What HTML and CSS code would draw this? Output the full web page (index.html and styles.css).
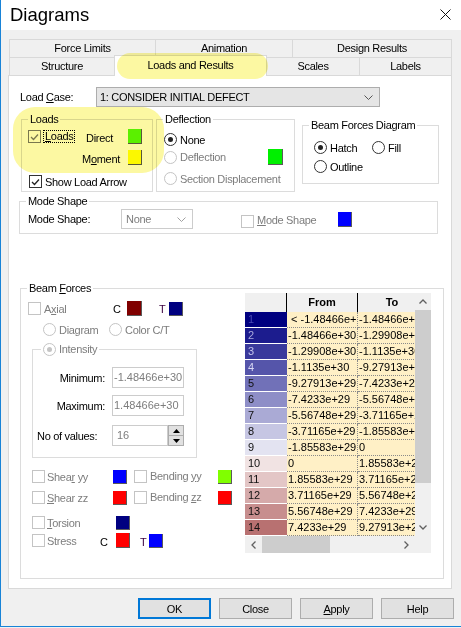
FILE: index.html
```html
<!DOCTYPE html>
<html>
<head>
<meta charset="utf-8">
<title>Diagrams</title>
<link rel="stylesheet" href="styles.css">
</head>
<body>
<div class="window">
  <div class="titlebar">
    <span class="title">Diagrams</span>
    <svg class="close" width="11" height="11" viewBox="0 0 11 11"><path d="M0.5 0.5L10.5 10.5M10.5 0.5L0.5 10.5" stroke="#111" stroke-width="1"/></svg>
  </div>
  <div class="client">
    <div class="tabs">
      <div class="tabrow">
        <div class="tab tw146">Force Limits</div>
        <div class="tab tw137">Animation</div>
        <div class="tab tw160 last">Design Results</div>
      </div>
      <div class="tabrow">
        <div class="tab tw105">Structure</div>
        <div class="tab tw153 sel">Loads and Results</div>
        <div class="tab tw92 nolb">Scales</div>
        <div class="tab tw93 last">Labels</div>
      </div>
    </div>
    <div class="panel">
      <div class="loadcase">
        <span class="lc-label">Load <u>C</u>ase:</span>
        <div class="combo lc-combo">
          <span>1: CONSIDER INITIAL DEFECT</span>
          <svg width="9" height="5" viewBox="0 0 9 5"><path d="M0.5 0.5L4.5 4.5L8.5 0.5" fill="none" stroke="#555" stroke-width="1"/></svg>
        </div>
      </div>

      <div class="grouprow">
        <div class="group g-loads">
          <div class="legend">Loads</div>
          <div class="lrow1">
            <div class="cell58"><span class="chk gray"><svg width="9" height="8" viewBox="0 0 9 8"><path d="M1 4L3.5 6.5L8 1.5" fill="none" stroke="#7a7a7a" stroke-width="1.3"/></svg></span><span class="focus"><u>L</u>oads</span></div>
            <span class="w42">Direct</span>
            <span class="sw c-direct"></span>
          </div>
          <div class="lrow2">
            <span class="w46">M<u>o</u>ment</span>
            <span class="sw c-yellow"></span>
          </div>
          <div class="lrow3">
            <span class="chk"><svg width="9" height="8" viewBox="0 0 9 8"><path d="M1 4L3.5 6.5L8 1.5" fill="none" stroke="#222" stroke-width="1.3"/></svg></span>
            <span class="lbl3">Show Load Arrow</span>
          </div>
        </div>

        <div class="group g-defl">
          <div class="legend">Deflection</div>
          <div class="drow1"><span class="rad on"></span><span class="lbl3">None</span></div>
          <div class="drow2"><span class="rad dis"></span><span class="lbl3 dis-t">Deflection</span><span class="sw big c-green"></span></div>
          <div class="drow3"><span class="rad dis"></span><span class="lbl3 dis-t">Section Displacement</span></div>
        </div>

        <div class="group g-bfd">
          <div class="legend">Beam Forces Diagram</div>
          <div class="brow1">
            <div class="cell58b"><span class="rad on"></span><span class="lbl3">Hatch</span></div>
            <span class="rad"></span><span class="lbl3">Fill</span>
          </div>
          <div class="brow2"><span class="rad"></span><span class="lbl3">Outline</span></div>
        </div>
      </div>

      <div class="group g-mode">
        <div class="legend">Mode Shape</div>
        <div class="mrow">
          <span class="w93">Mode Shape:</span>
          <div class="combo dis-combo">
            <span>None</span>
            <svg width="9" height="5" viewBox="0 0 9 5"><path d="M0.5 0.5L4.5 4.5L8.5 0.5" fill="none" stroke="#a0a0a0" stroke-width="1"/></svg>
          </div>
          <span class="chk dis mchk"></span>
          <span class="w81 dis-t"><u>M</u>ode Shape</span>
          <span class="sw c-blue"></span>
        </div>
      </div>

      <div class="group g-bf">
        <div class="legend">Beam <u>F</u>orces</div>
        <div class="bf-body">
          <div class="bf-left">
            <div class="axrow">
              <div class="cell85"><span class="chk dis"></span><span class="lbl3 dis-t">A<u>x</u>ial</span></div>
              <span class="w14">C</span>
              <span class="sw w15 c-maroon"></span>
              <span class="tlabel">T</span>
              <span class="sw s14 c-navy"></span>
            </div>
            <div class="radrow">
              <div class="cell66"><span class="rad dis"></span><span class="lbl3 dis-t">Diagram</span></div>
              <span class="rad dis"></span><span class="lbl3 dis-t">Color C/T</span>
            </div>
            <div class="intensity">
              <div class="legend ilegend"><span class="rad dis on"></span><span class="lbl3 dis-t">Intensity</span></div>
              <div class="irow ir1"><span class="ilabel">Minimum:</span><span class="tb">-1.48466e+30</span></div>
              <div class="irow ir2"><span class="ilabel">Maximum:</span><span class="tb">1.48466e+30</span></div>
              <div class="irow ir3"><span class="ilabel left">No of values:</span><span class="tb short">16</span>
                <span class="spin">
                  <span><svg width="7" height="4" viewBox="0 0 7 4"><path d="M0 4L3.5 0L7 4Z" fill="#000"/></svg></span>
                  <span><svg width="7" height="4" viewBox="0 0 7 4"><path d="M0 0L3.5 4L7 0Z" fill="#000"/></svg></span>
                </span>
              </div>
            </div>
            <div class="crow sh1">
              <div class="cell81"><span class="chk dis"></span><span class="lbl2 dis-t">Shea<u>r</u> yy</span></div>
              <span class="sw s14 c-blue"></span>
              <div class="cell84 ml7"><span class="chk dis"></span><span class="lbl3 dis-t up1">Bending <u>y</u>y</span></div>
              <span class="sw s14 c-lime"></span>
            </div>
            <div class="crow sh2">
              <div class="cell81"><span class="chk dis"></span><span class="lbl2 dis-t"><u>S</u>hear zz</span></div>
              <span class="sw s14 c-red"></span>
              <div class="cell84 ml7"><span class="chk dis"></span><span class="lbl3 dis-t up1">Bending <u>z</u>z</span></div>
              <span class="sw s14 c-red"></span>
            </div>
            <div class="crow tor">
              <div class="cell84"><span class="chk dis"></span><span class="lbl2 dis-t"><u>T</u>orsion</span></div>
              <span class="sw s14 c-navy"></span>
            </div>
            <div class="crow str">
              <div class="cell68"><span class="chk dis"></span><span class="lbl2 dis-t">Stress</span></div>
              <span class="w16 low">C</span>
              <span class="sw c-red"></span>
              <span class="tlabel2 low">T</span>
              <span class="sw s14 c-blue"></span>
            </div>
          </div>

          <div class="grid">
            <div class="gmain">
              <div class="gbody">
                <div class="ghead"><span class="c0"></span><span class="c1">From</span><span class="c2">To</span></div>
                <div class="grow"><span class="c0 k1">1</span><span class="c1">&nbsp;&lt; -1.48466e+30</span><span class="c2">-1.48466e+30</span></div>
                <div class="grow"><span class="c0 k2">2</span><span class="c1">-1.48466e+30</span><span class="c2">-1.29908e+30</span></div>
                <div class="grow"><span class="c0 k3">3</span><span class="c1">-1.29908e+30</span><span class="c2">-1.1135e+30</span></div>
                <div class="grow"><span class="c0 k4">4</span><span class="c1">-1.1135e+30</span><span class="c2">-9.27913e+29</span></div>
                <div class="grow"><span class="c0 k5">5</span><span class="c1">-9.27913e+29</span><span class="c2">-7.4233e+29</span></div>
                <div class="grow"><span class="c0 k6">6</span><span class="c1">-7.4233e+29</span><span class="c2">-5.56748e+29</span></div>
                <div class="grow"><span class="c0 k7">7</span><span class="c1">-5.56748e+29</span><span class="c2">-3.71165e+29</span></div>
                <div class="grow"><span class="c0 k8">8</span><span class="c1">-3.71165e+29</span><span class="c2">-1.85583e+29</span></div>
                <div class="grow"><span class="c0 k9">9</span><span class="c1">-1.85583e+29</span><span class="c2">0</span></div>
                <div class="grow"><span class="c0 k10">10</span><span class="c1">0</span><span class="c2">1.85583e+29</span></div>
                <div class="grow"><span class="c0 k11">11</span><span class="c1">1.85583e+29</span><span class="c2">3.71165e+29</span></div>
                <div class="grow"><span class="c0 k12">12</span><span class="c1">3.71165e+29</span><span class="c2">5.56748e+29</span></div>
                <div class="grow"><span class="c0 k13">13</span><span class="c1">5.56748e+29</span><span class="c2">7.4233e+29</span></div>
                <div class="grow"><span class="c0 k14">14</span><span class="c1">7.4233e+29</span><span class="c2">9.27913e+29</span></div>
              </div>
              <div class="vscroll">
                <span class="sbtn"><svg width="8" height="5" viewBox="0 0 8 5"><path d="M0.5 4.5L4 1L7.5 4.5" fill="none" stroke="#606060" stroke-width="1.3"/></svg></span>
                <span class="vthumb"></span>
                <span class="vspace"></span>
                <span class="sbtn"><svg width="8" height="5" viewBox="0 0 8 5"><path d="M0.5 0.5L4 4L7.5 0.5" fill="none" stroke="#606060" stroke-width="1.3"/></svg></span>
              </div>
            </div>
            <div class="hscroll">
              <div class="htrack">
                <span class="hbtn"><svg width="5" height="8" viewBox="0 0 5 8"><path d="M4.5 0.5L1 4L4.5 7.5" fill="none" stroke="#606060" stroke-width="1.3"/></svg></span>
                <span class="hthumb"></span>
                <span class="hspace"></span>
                <span class="hbtn"><svg width="5" height="8" viewBox="0 0 5 8"><path d="M0.5 0.5L4 4L0.5 7.5" fill="none" stroke="#606060" stroke-width="1.3"/></svg></span>
              </div>
              <span class="corner"></span>
            </div>
          </div>
        </div>
      </div>
    </div>

    <div class="buttons">
      <span class="btn def">OK</span>
      <span class="btn">Close</span>
      <span class="btn"><u>A</u>pply</span>
      <span class="btn">Help</span>
    </div>
  </div>

  <div class="hl hl-tab"></div>
  <div class="hl hl-loads"></div>
</div>
</body>
</html>
```

FILE: styles.css
```css
* { box-sizing: border-box; }
html, body { margin: 0; padding: 0; }
body {
  width: 461px; height: 628px; overflow: hidden;
  background: #f0f0f0;
  font-family: "Liberation Sans", Arial, sans-serif;
  font-size: 11px; letter-spacing: -0.3px; color: #000;
}
u { text-decoration: underline; text-underline-offset: 1px; }
.window {
  position: relative;
  width: 461px; height: 627px;
  border-left: 1px solid #1883d7;
  border-bottom: 1px solid #1883d7;
  background: #f0f0f0;
}
.titlebar {
  height: 30px; background: #fff;
  display: flex; align-items: center; justify-content: space-between;
  padding: 0 10px 0 9px;
}
.title { font-size: 18.5px; letter-spacing: 0; line-height: 1; }
.close { display: block; margin-top: -2px; }
.client { padding: 9px 0 0 7px; }

/* tabs */
.tabs { margin-left: 1px; }
.tabrow { display: flex; height: 18px; }
.tab {
  height: 18px; flex-shrink: 0;
  border-top: 1px solid #d9d9d9; border-left: 1px solid #d9d9d9;
  text-align: center; line-height: 17px; background: #f0f0f0;
}
.tab.last { border-right: 1px solid #d9d9d9; }
.tab.nolb { border-left: none; }
.tab.sel {
  position: relative; z-index: 2;
  margin-top: -2px; height: 21px; line-height: 18px;
  background: #fff; border-right: 1px solid #d9d9d9;
}
.tw146 { width: 146px; } .tw137 { width: 137px; } .tw160 { width: 160px; }
.tw105 { width: 105px; } .tw153 { width: 153px; } .tw92 { width: 92px; } .tw93 { width: 93px; }

.panel {
  width: 444px; height: 514px;
  border: 1px solid #d9d9d9; background: #fff;
  padding: 0 0 0 11px;
}

/* common controls */
.combo {
  display: flex; align-items: center; justify-content: space-between;
  height: 20px; border: 1px solid #adadad; background: #e5e5e5;
  padding: 0 6px 0 3px; flex-shrink: 0;
}
.combo svg { display: block; }
.loadcase { display: flex; align-items: center; height: 20px; margin-top: 11px; }
.lc-label { width: 76px; }
.lc-combo { width: 284px; }

.group { border: 1px solid #dcdcdc; flex-shrink: 0; }
.legend {
  display: table; margin: -7px 0 0 6px; padding: 0 2px;
  background: #fff; line-height: 13px; height: 13px; white-space: nowrap;
}
.chk {
  width: 13px; height: 13px; flex-shrink: 0;
  border: 1px solid #333; background: #fff;
  display: flex; align-items: center; justify-content: center;
}
.chk svg { display: block; }
.chk.gray { border-color: #7a7a7a; }
.chk.dis { border-color: #c4c4c4; }
.rad {
  width: 13px; height: 13px; flex-shrink: 0; border-radius: 50%;
  border: 1px solid #333; background: #fff;
  display: flex; align-items: center; justify-content: center;
}
.rad.on::after { content: ""; width: 5px; height: 5px; border-radius: 50%; background: #222; }
.rad.dis { border-color: #c4c4c4; }
.rad.dis.on::after { background: #c4c4c4; }
.sw {
  width: 14px; height: 15px; flex-shrink: 0;
  border-right: 1px solid #5a5a5a; border-bottom: 1px solid #5a5a5a;
}
.sw.big { width: 15px; height: 16px; }
.sw.s14 { height: 14px; }
.sw.w15 { width: 15px; }
.c-direct { background: #5cf700; }
.c-green { background: #00f000; }
.c-yellow { background: #ffff00; }
.c-blue { background: #0000ff; }
.c-maroon { background: #800000; }
.c-navy { background: #000080; }
.c-red { background: #ff0000; }
.c-lime { background: #80ff00; }
.dis-t { color: #7d7d7d; }
.lbl3 { margin-left: 3px; white-space: nowrap; }
.lbl2 { margin-left: 2px; white-space: nowrap; }
.up1 { margin-top: -2px; }

/* top group row */
.grouprow { display: flex; align-items: flex-start; margin-top: 12px; }
.g-loads { width: 132px; height: 73px; margin-left: 1px; }
.lrow1 { display: flex; align-items: center; height: 15px; margin-top: 3px; padding-left: 6px; }
.cell58 { width: 58px; display: flex; align-items: center; }
.focus { margin-left: 2px; border: 1px dotted #000; padding: 0 1px; line-height: 11px; }
.w42 { width: 42px; padding-top: 2px; }
.lrow2 { display: flex; align-items: center; height: 15px; margin-top: 6px; padding-left: 60px; }
.w46 { width: 46px; padding-top: 2px; }
.lrow3 { display: flex; align-items: center; height: 13px; margin-top: 10px; padding-left: 7px; }

.g-defl { width: 139px; height: 73px; margin-left: 3px; }
.drow1 { display: flex; align-items: center; height: 13px; margin-top: 7px; padding-left: 7px; }
.drow2 { display: flex; align-items: center; height: 16px; margin-top: 3px; padding: 0 11px 0 7px; }
.drow2 .sw { margin-left: auto; }
.drow3 { display: flex; align-items: center; height: 13px; margin-top: 7px; padding-left: 7px; }

.g-bfd { width: 137px; height: 59px; margin-left: 7px; margin-top: 6px; }
.brow1 { display: flex; align-items: center; height: 13px; margin-top: 9px; padding-left: 11px; }
.cell58b { width: 58px; display: flex; align-items: center; }
.brow2 { display: flex; align-items: center; height: 13px; margin-top: 6px; padding-left: 11px; }

/* mode shape */
.g-mode { width: 419px; height: 33px; margin-left: -1px; margin-top: 9px; }
.mrow { display: flex; align-items: center; height: 20px; margin-top: 1px; padding-left: 8px; }
.w93 { width: 93px; }
.dis-combo { width: 72px; border-color: #cccccc; background: #fff; color: #7d7d7d; padding: 0 6px 0 4px; }
.mchk { margin-left: 48px; margin-top: 4px; }
.w81 { width: 81px; margin-left: 3px; margin-top: 2px; }

/* beam forces */
.g-bf { width: 424px; height: 291px; margin-top: 54px; }
.bf-body { display: flex; align-items: flex-start; }
.bf-left { width: 224px; flex-shrink: 0; }
.axrow { display: flex; align-items: center; height: 15px; margin-top: 6px; padding-left: 7px; }
.cell85 { width: 85px; display: flex; align-items: center; }
.w14 { width: 14px; }
.w16 { width: 16px; }
.tlabel { margin-left: 17px; width: 10px; color: #3a003f; }
.tlabel2 { margin-left: 10px; width: 9px; color: #3a003f; }
.radrow { display: flex; align-items: center; height: 13px; margin-top: 7px; padding-left: 22px; }
.cell66 { width: 66px; display: flex; align-items: center; }

.intensity { width: 165px; height: 109px; margin: 13px 0 0 11px; border: 1px solid #dcdcdc; }
.ilegend { display: flex; align-items: center; width: max-content; margin-left: 8px; }
.irow { display: flex; align-items: center; height: 21px; }
.ir1 { margin-top: 11px; }
.ir2 { margin-top: 7px; }
.ir3 { margin-top: 9px; }
.ilabel { width: 72px; text-align: right; margin-right: 7px; white-space: nowrap; }
.ilabel.left { text-align: left; padding-left: 4px; }
.tb {
  width: 72px; height: 21px; border: 1px solid #cccccc; background: #fff;
  color: #7d7d7d; padding: 0 0 0 1px; line-height: 19px; letter-spacing: 0;
  overflow: hidden; white-space: nowrap; flex-shrink: 0;
}
.tb.short { width: 56px; padding-left: 4px; }
.spin {
  width: 16px; height: 21px; display: flex; flex-direction: column;
  border: 1px solid #adadad; background: #e1e1e1; flex-shrink: 0;
}
.spin span { flex: 1; display: flex; align-items: center; justify-content: center; }
.spin span + span { border-top: 1px solid #adadad; }
.spin svg { display: block; }

.crow { display: flex; align-items: center; height: 15px; padding-left: 11px; }
.sh1 { margin-top: 11px; }
.sh2 { margin-top: 6px; }
.tor { margin-top: 10px; }
.str { margin-top: 3px; }
.cell81 { width: 81px; display: flex; align-items: center; }
.cell84 { width: 84px; display: flex; align-items: center; }
.cell68 { width: 68px; display: flex; align-items: center; }
.ml7 { margin-left: 7px; }
.low { align-self: flex-end; line-height: 12px; }

/* grid */
.grid { width: 186px; height: 260px; margin-top: -2px; flex-shrink: 0; letter-spacing: 0; }
.gmain { display: flex; height: 243px; }
.gbody { width: 170px; overflow: hidden; }
.ghead { display: flex; height: 19px; background: #f0f0f0; font-weight: bold; line-height: 19px; }
.ghead span { flex-shrink: 0; }
.ghead .c0 { width: 42px; border-right: 1px solid #000; }
.ghead .c1 { width: 71px; border-right: 1px solid #000; text-align: center; }
.ghead .c2 { width: 68px; text-align: center; }
.grow { display: flex; height: 16px; line-height: 15px; }
.grow span { flex-shrink: 0; overflow: hidden; white-space: nowrap; }
.grow .c0 { width: 42px; border-bottom: 1px solid #fff; padding-left: 3px; color: #111; }
.grow .c1 { width: 71px; background: #fff0c6; border-right: 1px dotted #8a8a8a; border-bottom: 1px dotted #8a8a8a; padding-left: 1px; }
.grow .c2 { width: 68px; background: #fff0c6; border-bottom: 1px dotted #8a8a8a; padding-left: 1px; }
.k1 { background: #000080; color: #4a4ab4 !important; }
.k2 { background: #1c1c8e; color: #a8a8dc !important; }
.k3 { background: #39399c; color: #c4c4ec !important; }
.k4 { background: #5555aa; color: #d8d8f4 !important; }
.k5 { background: #7171b8; }
.k6 { background: #8e8ec7; }
.k7 { background: #aaaad5; }
.k8 { background: #c6c6e3; }
.k9 { background: #e3e3f1; }
.k10 { background: #f1e3e3; }
.k11 { background: #e3c6c6; }
.k12 { background: #d5aaaa; }
.k13 { background: #c78e8e; }
.k14 { background: #b87171; }

.vscroll { width: 16px; background: #f0f0f0; display: flex; flex-direction: column; }
.sbtn { height: 17px; flex-shrink: 0; display: flex; align-items: center; justify-content: center; }
.sbtn svg, .hbtn svg { display: block; }
.vthumb { height: 173px; background: #cdcdcd; flex-shrink: 0; }
.vspace { flex: 1; }
.hscroll { display: flex; height: 17px; }
.htrack { width: 170px; display: flex; background: #f0f0f0; }
.hbtn { width: 17px; flex-shrink: 0; display: flex; align-items: center; justify-content: center; }
.hthumb { width: 68px; background: #cdcdcd; flex-shrink: 0; }
.hspace { flex: 1; }
.corner { width: 16px; background: #f0f0f0; }

/* buttons */
.buttons { display: flex; justify-content: flex-end; gap: 8px; padding-right: 7px; margin-top: 9px; }
.btn {
  width: 73px; height: 21px; border: 1px solid #adadad; background: #e1e1e1;
  display: flex; align-items: center; justify-content: center;
}
.btn.def { border: 2px solid #0078d7; }

/* yellow annotation highlights */
.hl { position: absolute; z-index: 5; background: #fcf8a2; mix-blend-mode: multiply; pointer-events: none; }
.hl-tab { left: 116px; top: 53px; width: 151px; height: 26px; border-radius: 13px; }
.hl-loads { left: 12px; top: 107px; width: 151px; height: 66px; border-radius: 22px; }
```
